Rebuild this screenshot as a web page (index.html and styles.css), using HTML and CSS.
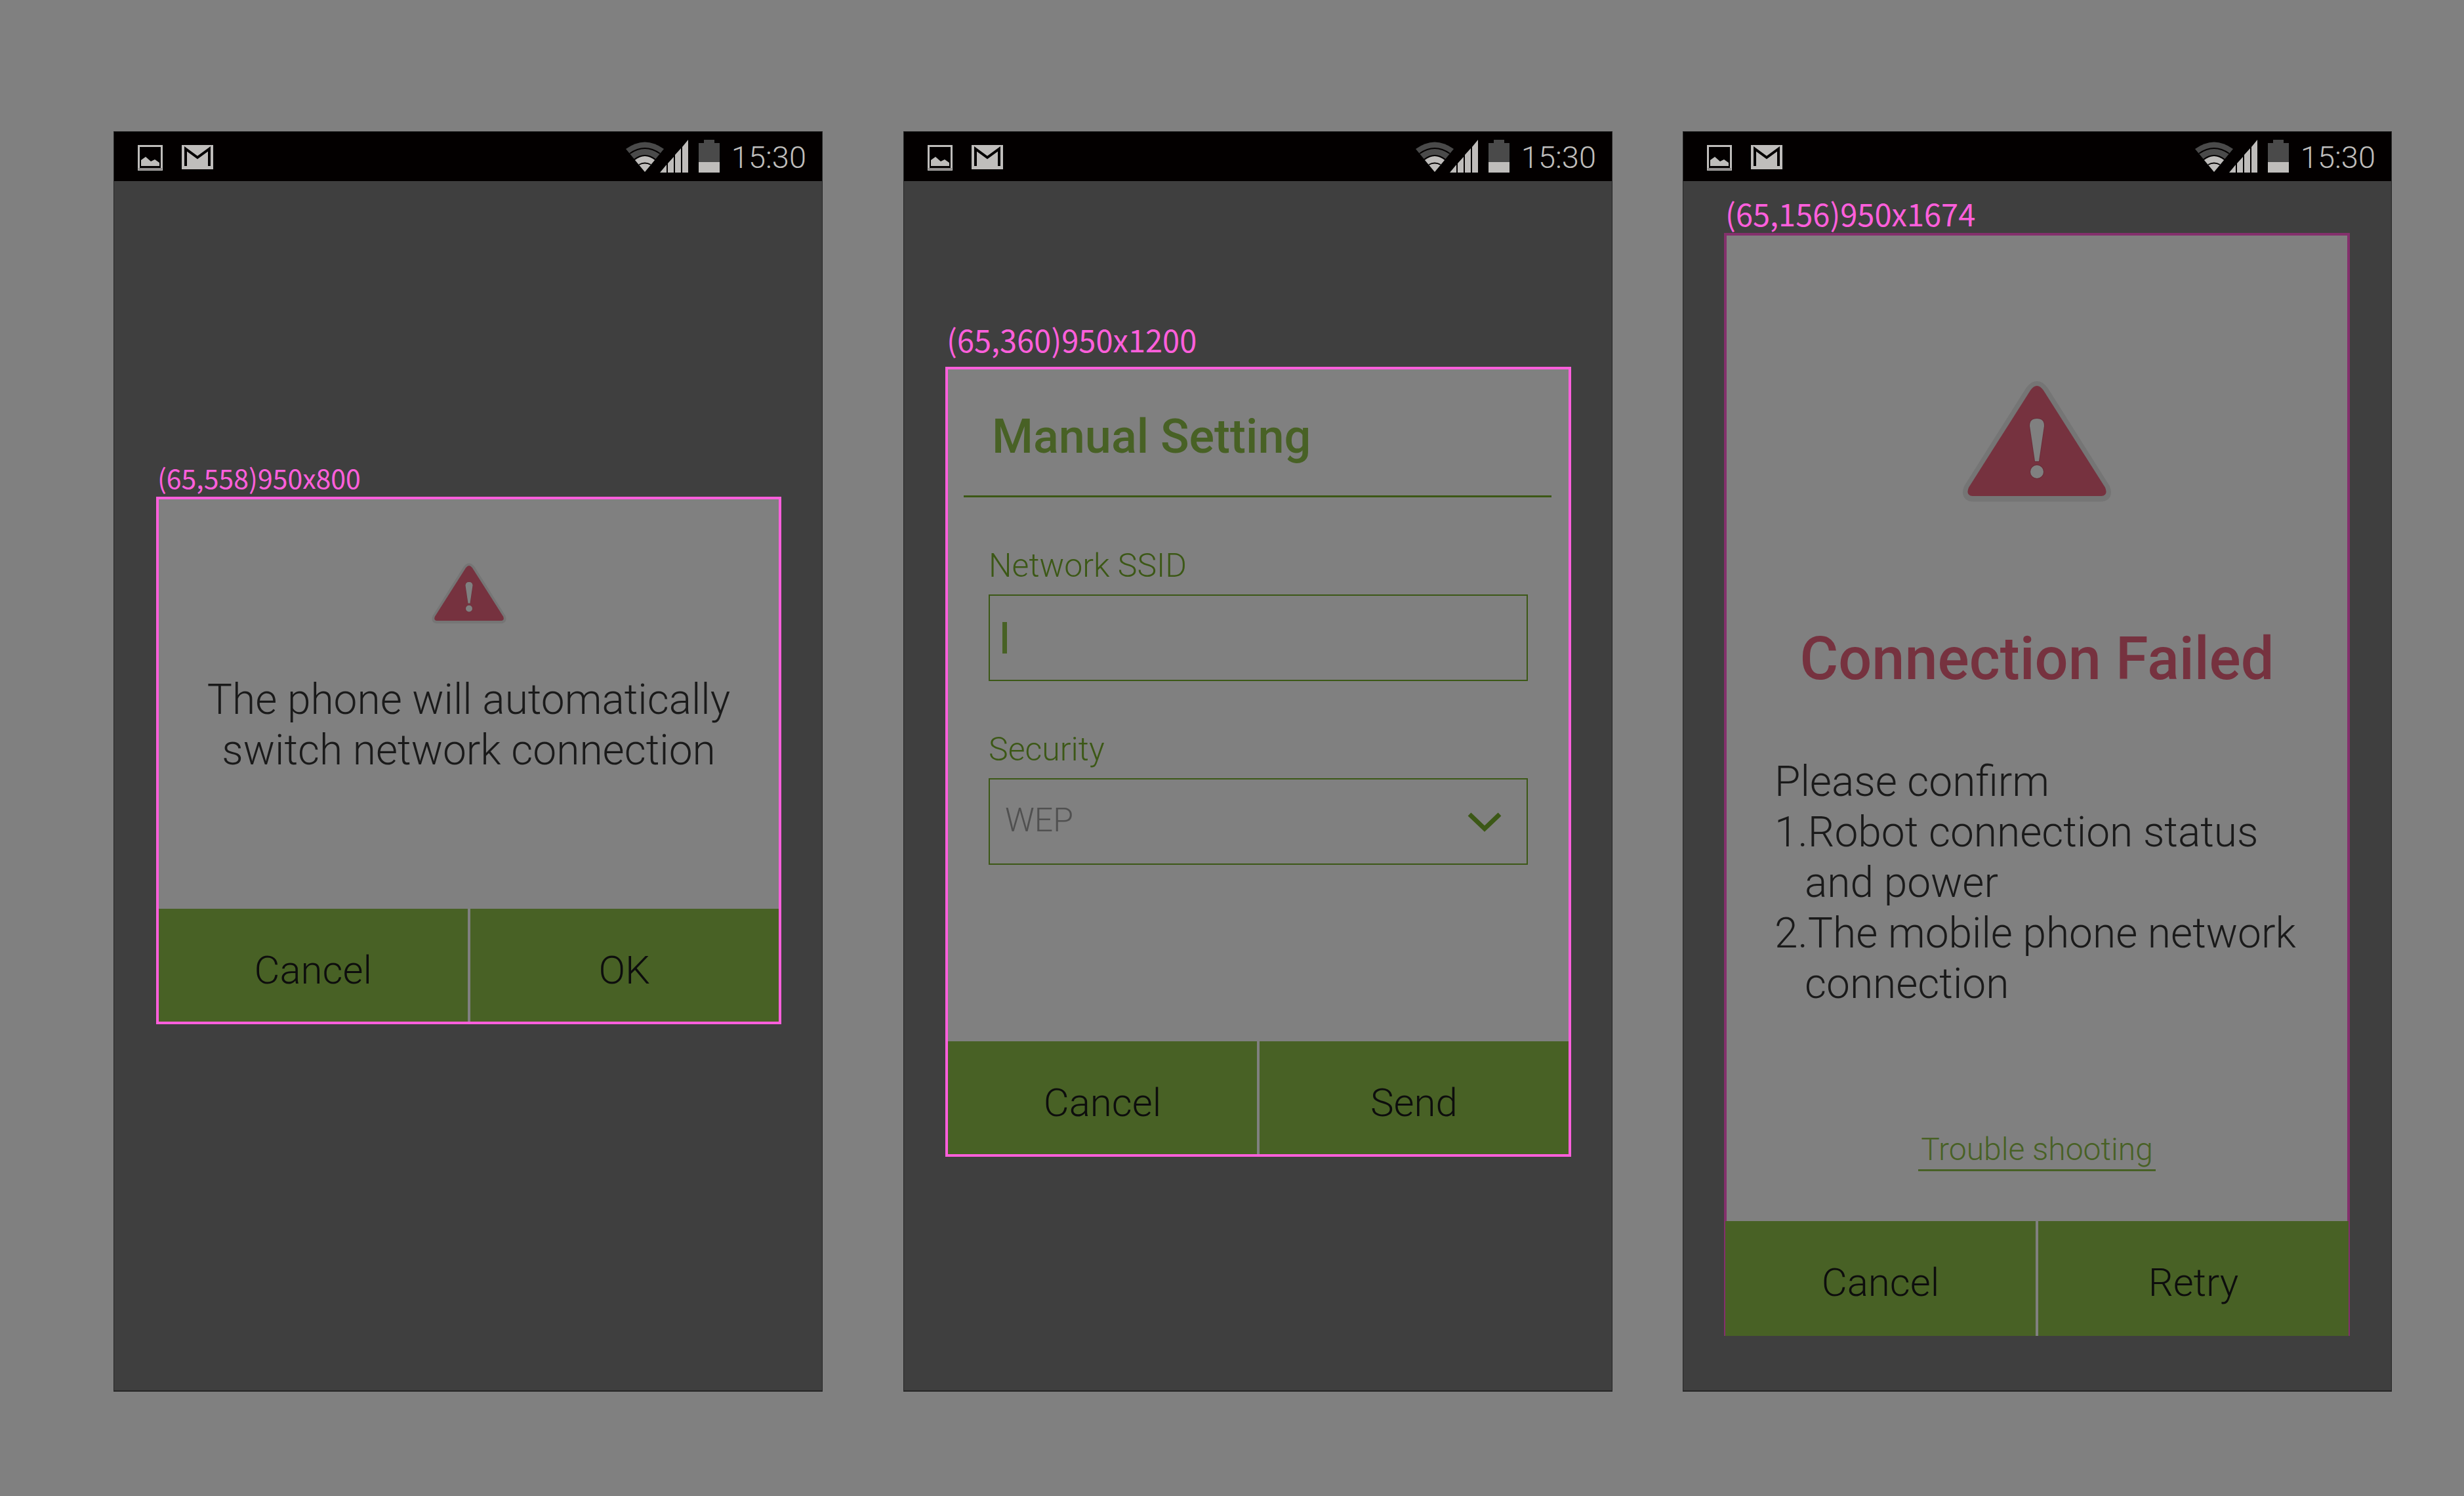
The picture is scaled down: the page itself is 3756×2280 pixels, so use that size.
FILE: index.html
```html
<!DOCTYPE html>
<html lang="en">
<head>
<meta charset="utf-8">
<title>Connection dialogs</title>
<link rel="stylesheet" href="styles.css">
</head>
<body>
<svg class="sprite" aria-hidden="true">
  <symbol id="picture" viewBox="0 0 38 39">
    <path fill="#bfbdbb" fill-rule="evenodd" d="M0 0H38V39H0ZM3 3V35H35V3Z"/>
    <path fill="#8f8c8c" d="M1 35H37V38H1Z"/>
    <path fill="#bfbdbb" d="M5 32V23L12 18L20 25L26 22L33 27V32Z"/>
  </symbol>
  <symbol id="mail" viewBox="0 0 48 37">
    <path fill="#bfbdbb" d="M0 0H48V37H0Z"/>
    <path fill="none" stroke="#030000" stroke-width="4" d="M6 32V6L24 19L42 6V32"/>
  </symbol>
  <symbol id="wifi" viewBox="0 0 58 46">
    <path fill="#4a4a4a" d="M0 11Q29 -10 58 11L29 46Z"/>
    <path fill="#bfbdbb" d="M14 28Q29 16 44 28L29 46Z"/>
    <path fill="none" stroke="#030000" stroke-width="2" d="M6 18Q29 2 52 18M13 27Q29 15 45 27M20 35Q29 30 38 35"/>
  </symbol>
  <symbol id="signal" viewBox="0 0 43 50">
    <path fill="#bfbdbb" d="M0 50L10 38V50ZM12 36L21 26V50H12ZM23 23L32 13V50H23ZM34 11L43 0V50H34Z"/>
  </symbol>
  <symbol id="battery" viewBox="0 0 32 50">
    <path fill="#4a4a4a" d="M8 0H24V5H32V34H0V5H8Z"/>
    <path fill="#bfbdbb" d="M0 34H32V50H0Z"/>
  </symbol>
  <symbol id="warning" viewBox="0 0 240 190">
    <path fill="#757575" stroke="#757575" stroke-width="15" stroke-linejoin="round" d="M110 19Q120 6 130 19L224 168Q229 180 218 181H22Q11 180 16 168Z"/>
    <path fill="#76323f" d="M110 19Q120 5 130 19L224 167Q229 179 218 180H22Q11 179 16 167Z"/>
    <g fill="#808080" stroke="#6a2d39" stroke-width="2" paint-order="stroke">
      <path d="M109 73Q109 62 120 62T131 73L123 127H117Z"/>
      <circle cx="120" cy="143" r="10"/>
    </g>
  </symbol>
</svg>

<main class="board">
  <section class="phone phone-first">
    <header class="status">
      <svg class="icon-picture"><use href="#picture"/></svg>
      <svg class="icon-mail"><use href="#mail"/></svg>
      <svg class="icon-wifi"><use href="#wifi"/></svg>
      <svg class="icon-signal"><use href="#signal"/></svg>
      <svg class="icon-battery"><use href="#battery"/></svg>
      <time class="clock">15:30</time>
    </header>
    <div class="screen screen-switch">
      <p class="note note-small">(65,558)950x800</p>
      <div class="dialog" role="dialog" aria-label="Switch network">
        <div class="message">
          <svg class="warning-small"><use href="#warning"/></svg>
          <p class="text">The phone will automatically<br>switch network connection</p>
        </div>
        <div class="actions">
          <button class="action" type="button">Cancel</button>
          <button class="action" type="button">OK</button>
        </div>
      </div>
    </div>
  </section>

  <section class="phone">
    <header class="status">
      <svg class="icon-picture"><use href="#picture"/></svg>
      <svg class="icon-mail"><use href="#mail"/></svg>
      <svg class="icon-wifi"><use href="#wifi"/></svg>
      <svg class="icon-signal"><use href="#signal"/></svg>
      <svg class="icon-battery"><use href="#battery"/></svg>
      <time class="clock">15:30</time>
    </header>
    <div class="screen screen-manual">
      <p class="note note-spaced">(65,360)950x1200</p>
      <form class="dialog">
        <h2 class="form-title">Manual Setting</h2>
        <div class="fields">
          <label class="label" for="ssid">Network SSID</label>
          <div class="box">
            <span class="caret"></span>
            <input class="input" id="ssid" type="text">
          </div>
          <label class="label" for="security">Security</label>
          <div class="box">
            <select class="select" id="security"><option>WEP</option></select>
            <svg class="chevron" viewBox="0 0 52 30"><path fill="none" stroke="#3c5816" stroke-width="7" d="M3 3L26 25L49 3"/></svg>
          </div>
        </div>
        <div class="actions">
          <button class="action" type="button">Cancel</button>
          <button class="action" type="submit">Send</button>
        </div>
      </form>
    </div>
  </section>

  <section class="phone">
    <header class="status">
      <svg class="icon-picture"><use href="#picture"/></svg>
      <svg class="icon-mail"><use href="#mail"/></svg>
      <svg class="icon-wifi"><use href="#wifi"/></svg>
      <svg class="icon-signal"><use href="#signal"/></svg>
      <svg class="icon-battery"><use href="#battery"/></svg>
      <time class="clock">15:30</time>
    </header>
    <div class="screen screen-failed">
      <p class="note">(65,156)950x1674</p>
      <div class="dialog dialog-failed" role="dialog" aria-label="Connection failed">
        <div class="failure">
          <svg class="warning-large"><use href="#warning"/></svg>
          <h2 class="failure-title">Connection Failed</h2>
          <div class="text checks">
            <p class="line">Please confirm</p>
            <ol class="list">
              <li class="item">1.Robot connection status<br>and power</li>
              <li class="item">2.The mobile phone network<br>connection</li>
            </ol>
          </div>
          <a class="link" href="#trouble">Trouble shooting</a>
        </div>
        <div class="actions actions-wide">
          <button class="action" type="button">Cancel</button>
          <button class="action" type="button">Retry</button>
        </div>
      </div>
    </div>
  </section>
</main>
</body>
</html>
```
FILE: styles.css
```css
* {
  box-sizing: border-box;
}

body {
  margin: 0;
  background: #808080;
  font-family: Roboto, "Noto Sans", sans-serif;
  font-weight: 300;
}

p,
h2,
ol {
  margin: 0;
  padding: 0;
}

svg {
  display: block;
  flex: none;
}

.sprite {
  position: absolute;
  width: 0;
  height: 0;
}

.board {
  display: flex;
  gap: 107px;
  padding: 200px 110px 158px 173px;
}

.phone {
  flex: 1;
  min-width: 0;
  background: #3f3f3f;
  border: 1px solid #262626;
  border-bottom-width: 2px;
}

.phone-first {
  margin-right: 16px;
}

/* Status bar */
.status {
  display: flex;
  align-items: flex-end;
  height: 75px;
  padding: 0 24px 13px 36px;
  background: #030000;
}

.icon-picture {
  width: 38px;
  height: 39px;
  margin: 0 29px 3px 0;
}

.icon-mail {
  width: 48px;
  height: 37px;
  margin: 0 auto 5px 0;
}

.icon-wifi {
  width: 58px;
  height: 46px;
  margin: 0 -6px 1px 0;
}

.icon-signal {
  width: 43px;
  height: 50px;
  margin-right: 16px;
}

.icon-battery {
  width: 32px;
  height: 50px;
  margin-right: 18px;
}

.clock {
  color: #bfbdbb;
  font-size: 47px;
  line-height: 46px;
}

/* Dialogs */
.screen {
  padding: 0 62px 83px 64px;
}

.screen-switch {
  padding-top: 421px;
}

.screen-manual {
  padding-top: 211px;
  padding-left: 63px;
}

.screen-failed {
  padding-top: 19px;
  padding-right: 63px;
  padding-left: 62px;
}

.note {
  padding-left: 2px;
  color: #ff5fdc;
  font-family: "Noto Sans CJK TC", "Noto Sans", sans-serif;
  font-size: 47px;
  font-weight: 400;
  line-height: 60px;
}

.note-small {
  font-size: 41px;
}

.note-spaced {
  margin-bottom: 12px;
}

.dialog {
  background: #808080;
  border: 4px solid #ff5fdc;
}

.dialog-failed {
  border-color: #84306c;
  border-bottom: 0;
}

.text {
  color: #1a1a1a;
  font-size: 64px;
  line-height: 77px;
}

.message {
  display: flex;
  flex-direction: column;
  align-items: center;
  gap: 77px;
  padding: 95px 0 203px;
  text-align: center;
}

.warning-small {
  width: 120px;
  height: 95px;
}

.warning-large {
  width: 240px;
  height: 190px;
}

.actions {
  display: flex;
  gap: 4px;
}

.actions-wide {
  margin: 0 -2px;
  background: #808080;
}

.action {
  flex: 1;
  padding: 58px 0 42px;
  border: 0;
  background: #486125;
  color: #0d0d0d;
  font: inherit;
  font-size: 60px;
  line-height: 72px;
}

.actions-wide .action {
  padding-bottom: 45px;
}

/* Manual setting form */
.form-title {
  margin: 0 26px 0 24px;
  padding: 61px 43px 47px;
  border-bottom: 3px solid #3c5816;
  color: #486125;
  font-size: 72px;
  font-weight: 500;
  line-height: 84px;
}

.fields {
  padding: 0 62px 269px;
}

.label {
  display: block;
  padding-top: 74px;
  margin-bottom: 14px;
  color: #3c5816;
  font-size: 50px;
  line-height: 60px;
}

.box {
  position: relative;
  display: flex;
  align-items: center;
  height: 132px;
  border: 2px solid #3c5816;
}

.caret {
  width: 7px;
  height: 48px;
  margin-left: 19px;
  background: #486125;
}

.input,
.select {
  flex: 1;
  min-width: 0;
  height: 100%;
  border: 0;
  outline: 0;
  background: transparent;
  color: #505050;
  font: inherit;
  font-size: 50px;
}

.select {
  appearance: none;
  padding: 0 96px 4px 23px;
}

.chevron {
  position: absolute;
  top: 50px;
  right: 38px;
  width: 52px;
  height: 30px;
  pointer-events: none;
}

/* Connection failed */
.failure {
  display: flex;
  flex-direction: column;
  align-items: center;
  padding: 217px 0 76px;
}

.failure-title {
  margin: 187px 0 96px;
  color: #76323f;
  font-size: 90px;
  font-weight: 500;
  line-height: 104px;
}

.checks {
  align-self: stretch;
  padding-left: 73px;
}

.list {
  list-style: none;
}

.item {
  padding-left: 46px;
  text-indent: -46px;
}

.link {
  margin-top: 184px;
  padding: 0 4px;
  border-bottom: 3px solid #486125;
  color: #486125;
  font-size: 48px;
  line-height: 60px;
  text-decoration: none;
}
```
